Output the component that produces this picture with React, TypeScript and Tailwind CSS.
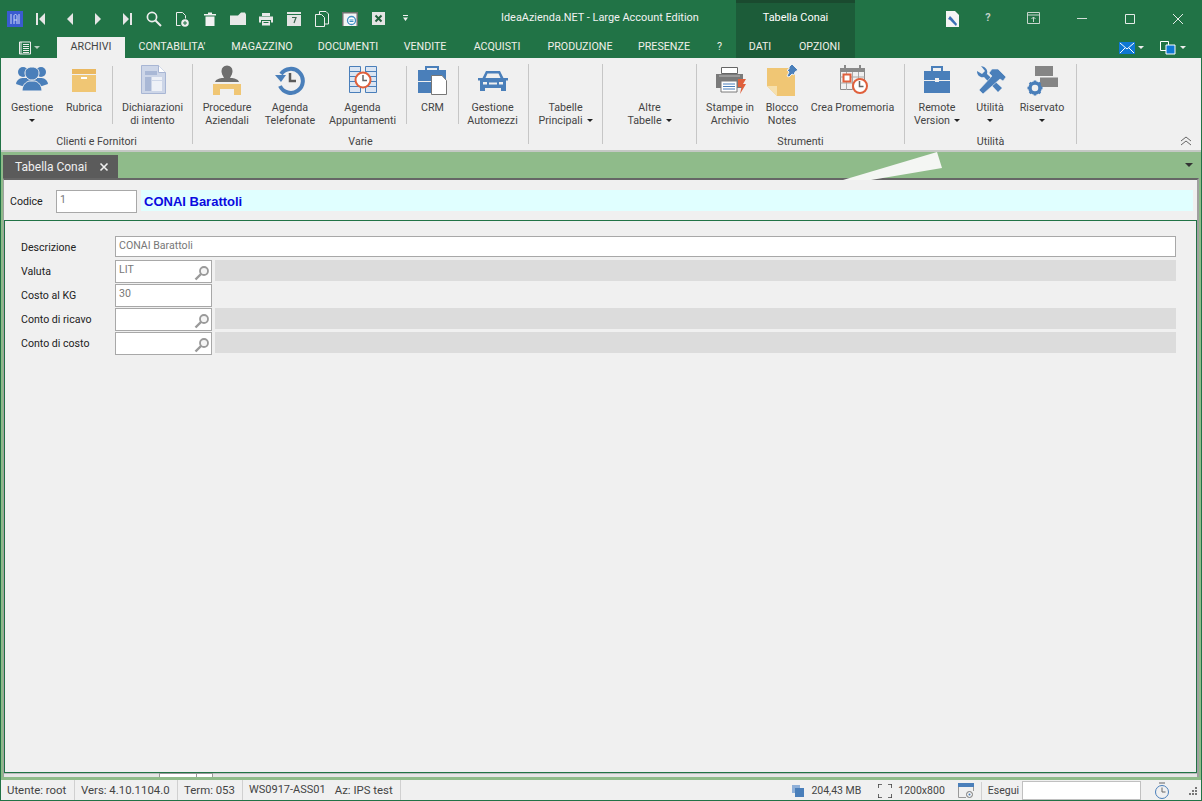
import type { ReactNode } from 'react'

const GREEN = 'bg-[#217346]'

function Glyph({ w = 18, h = 18, box = '0 0 18 18', children }: { w?: number; h?: number; box?: string; children: ReactNode }) {
  return (
    <svg width={w} height={h} viewBox={box} fill="none" className="block shrink-0">
      {children}
    </svg>
  )
}

const QAT: ReactNode[] = [
  <Glyph key="first"><path d="M3 3h2v12H3zM12 3v12L6 9z" fill="#e6e6e6" /></Glyph>,
  <Glyph key="prev"><path d="M12 3v12L6 9z" fill="#e6e6e6" /></Glyph>,
  <Glyph key="next"><path d="M6 3v12l6-6z" fill="#e6e6e6" /></Glyph>,
  <Glyph key="last"><path d="M13 3h2v12h-2zM6 3v12l6-6z" fill="#e6e6e6" /></Glyph>,
  <Glyph key="search"><circle cx="7" cy="7" r="4.6" stroke="#eee" strokeWidth="1.7" /><path d="M10.5 10.5 16 16" stroke="#eee" strokeWidth="2" /></Glyph>,
  <Glyph key="new"><path d="M3.500 2.500h6l3 3v3M3.500 2.500v13h4" stroke="#eee" /><circle cx="12" cy="13" r="3.800" fill="#eee" /><path d="M10 13h4M12 11v4" stroke="#217346" /></Glyph>,
  <Glyph key="trash"><path d="M3 4h12v1.500H3zM7 2.500h4V4H7zM4.500 6.500h9V16h-9z" fill="#f2f2f2" /></Glyph>,
  <Glyph key="folder"><path d="M1 5.500h8l3-3h4l1 2V15H1z" fill="#e8e8e8" /></Glyph>,
  <Glyph key="print"><path d="M5 3h8v3H5zM2 6.500h14v6h-2V10H4v2.500H2zM5 11h8v4.500H5z" fill="#e8e8e8" /><path d="M6.500 12.500h5" stroke="#217346" /></Glyph>,
  <Glyph key="calc"><path d="M2 2h14v14H2z" fill="#e4e4e4" /><path d="M2 4.500h14" stroke="#217346" /><path d="M7 7.500h4l-2 5.500" stroke="#3c6650" strokeWidth="1.200" /></Glyph>,
  <Glyph key="copy"><path d="M6.500 4V1.500H13l2.500 2.500v10H12" stroke="#eee" /><path d="M2.500 4.500h6l3 3v9h-9z" stroke="#eee" /></Glyph>,
  <Glyph key="preview"><path d="M1 3h16v13H1z" fill="#f4f4f4" /><path d="M1 2h16v1.500H1zM1 2h1.500v14H1zM15.500 2H17v14h-1.500z" fill="#707070" /><circle cx="10.500" cy="10.500" r="4" stroke="#3f8fc4" strokeWidth="1.300" fill="#fff" /><path d="M8.500 10h4M8.500 11.500h4" stroke="#3f8fc4" /></Glyph>,
  <Glyph key="excel"><path d="M3 2h13v13H3z" fill="#e4e4e4" /><path d="m6.500 5.500 6 6M12.500 5.500l-6 6" stroke="#20603c" strokeWidth="2" /></Glyph>,
  <Glyph key="more"><path d="M6 5h5v1H6zM6 7.500h5L8.500 11z" fill="#f0f0f0" /></Glyph>,
]

const BLUE = '#4a7fba'
const ORANGE = '#f0c674'
const RED = '#e0603c'

function Icon({ children }: { children: ReactNode }) {
  return (
    <svg width={32} height={32} viewBox="0 0 32 32" fill="none" className="block">
      {children}
    </svg>
  )
}

const People = (
  <Icon>
    <circle cx="7" cy="8" r="5" fill={BLUE} />
    <circle cx="25" cy="8" r="5" fill={BLUE} />
    <path d="M0 20c1-5 4-6 8-6h16c4 0 7 1 8 6l-6 2H6z" fill={BLUE} />
    <path d="M9 9c0-4 3-6 7-6s7 2 7 6-3 7-7 7-7-3-7-7z" fill={BLUE} stroke="#f0f0f0" />
    <path d="M6 27c0-6 4-9 7-10h6c3 1 7 4 7 10z" fill={BLUE} stroke="#f0f0f0" />
  </Icon>
)
const Box = (
  <Icon>
    <path d="M4 5h24v5H4z" fill="#eab860" />
    <path d="M4 11h24v17H4z" fill={ORANGE} />
    <path d="M13 13h6v2h-6z" fill="#fff" />
  </Icon>
)
const FormDoc = (
  <Icon>
    <path d="M4.500 1.500h17l7 7v21h-24z" fill="#cdd6e8" stroke="#a8b6d4" />
    <path d="M21.500 1.500v7h7" fill="#fff" stroke="#a8b6d4" />
    <path d="M8 7h12v4H8zM8 13h6v14H8zM15 13h10v3H15zM15 17h10v10H15z" fill="#eef1f7" />
    <path d="M8 7h12v4H8zM8 13h6v14H8z" fill="#a9b8d6" />
  </Icon>
)
const DeskPerson = (
  <Icon>
    <circle cx="16" cy="7" r="5.500" fill="#6e6e6e" />
    <path d="M16 2c3 0 6 3 5 8l-2 4h-6l-2-4c-1-5 2-8 5-8z" fill="#6e6e6e" />
    <path d="M4 18c1-3 5-4 8-4h8c3 0 7 1 8 4z" fill="#6e6e6e" />
    <path d="M2 20h28v11h-7v-6H9v6H2z" fill={ORANGE} />
  </Icon>
)
const History = (
  <Icon>
    <path d="M7 10a12 12 0 1 1-1 12" stroke={BLUE} strokeWidth="4" />
    <path d="M1 11h11l-5 7z" fill={BLUE} />
    <path d="M16 9v8h6" stroke="#5a5a5a" strokeWidth="2.500" />
  </Icon>
)
const TableClock = (
  <Icon>
    <path d="M2.500 2.500h11v26h-11zM18.500 2.500h11v26h-11z" fill="#dbe5f2" stroke={BLUE} />
    <path d="M3 7.500h10M3 12.500h10M3 17.500h10M3 22.500h10M19 7.500h10M19 12.500h10M19 17.500h10M19 22.500h10" stroke={BLUE} />
    <circle cx="16" cy="16" r="7.500" fill="#fff" stroke={RED} strokeWidth="2" />
    <path d="M16 11v5.500h4" stroke="#666" strokeWidth="1.500" />
  </Icon>
)
const BriefDoc = (
  <Icon>
    <path d="M9 6V3h12v3" stroke={BLUE} strokeWidth="2" />
    <path d="M1 6h28v11H1zM1 18h16v11H1z" fill={BLUE} />
    <path d="M14.500 11.500H25l4.500 5v14h-15z" fill="#fff" stroke="#777" />
  </Icon>
)
const Car = (
  <Icon>
    <path d="M9 7h14l3.500 7H31v2.500h-2V27h-5v-3H8v3H3V16.500H1V14h4.500z" fill={BLUE} />
    <path d="M10.500 9.500h11l2 4.500h-15z" fill="#f0f0f0" />
    <path d="M6 18h4v2.500H6zM22 18h4v2.500h-4zM12 18.500h8v2h-8z" fill="#f0f0f0" />
  </Icon>
)
const PrinterBolt = (
  <Icon>
    <path d="M7.500 3.500h16v6h-16z" fill="#fff" stroke="#666" />
    <path d="M2 10h27v14H2z" fill="#7a7a7a" />
    <path d="M5 11h21v2H5z" fill="#9a9a9a" />
    <path d="M7 17h16v11H7z" fill="#fff" stroke="#7a7a7a" />
    <path d="M9 20h12M9 22.500h12M9 25h12" stroke={BLUE} />
    <path d="M24 15h8l-3 5h3l-6 10 1.500-7H24z" fill={RED} />
  </Icon>
)
const Note = (
  <Icon>
    <path d="M1 4h28v28H11L1 22z" fill={ORANGE} />
    <path d="M1 22h10v10z" fill="#f6e0ad" />
    <path d="m23 3 3-3 6 6-3 2-1 3-2-1-3 3-2-1 2-4-2-2 2-1z" fill={BLUE} stroke="#f0f0f0" />
  </Icon>
)
const CalendarClock = (
  <Icon>
    <path d="M3.500 4.500h24v21h-24z" fill="#f0f0f0" stroke="#8a8a8a" />
    <path d="M3 4h25v4H3z" fill="#8a8a8a" />
    <path d="M7 1h2v5H7zM22 1h2v5h-2z" fill="#8a8a8a" />
    <path d="M3.500 13h24M3.500 19h24M9.500 8v18M15.500 8v18M21.500 8v18" stroke="#a8a8a8" />
    <path d="M6.500 10.500h7v7h-7z" fill="#fff" stroke={RED} strokeWidth="2" />
    <circle cx="23" cy="22" r="7" fill="#fff" stroke={RED} strokeWidth="2" />
    <path d="M22.500 17v5.500h4" stroke="#666" strokeWidth="1.500" />
  </Icon>
)
const Briefcase = (
  <Icon>
    <path d="M11 7V3h10v4" stroke={BLUE} strokeWidth="2" />
    <path d="M3 7h26v9H3zM3 17h26v12H3z" fill={BLUE} />
    <path d="M14 14h4v4h-4z" fill="#f0f0f0" />
  </Icon>
)
const Tools = (
  <Icon>
    <path d="M3 7c0 5 4 7 7 6l14 15 4-4L13 10c1-4-1-7-6-8l4 5-3 3z" fill={BLUE} />
    <path d="m5 26 13-14-3-3 3-4h6l8 8-3 4-3-2L9 30z" fill={BLUE} stroke="#f0f0f0" strokeWidth=".6" />
  </Icon>
)
const GearBoxes = (
  <Icon>
    <path d="M9 2h18v10H9zM14 13h18v10H14z" fill="#858585" />
    <path d="M14 13h18" stroke="#f0f0f0" />
    <circle cx="9" cy="24" r="5" stroke={BLUE} strokeWidth="3.500" />
    <path d="M9 16.500v3M9 28.500v3M1.500 24h3M13.500 24h3M3.700 18.700l2 2M12.300 27.300l2 2M14.300 18.700l-2 2M5.700 27.300l-2 2" stroke={BLUE} strokeWidth="2.500" />
  </Icon>
)

function Caret() {
  return <span className="block h-0 w-0 border-x-[3px] border-t-[3px] border-x-transparent border-t-[#222]" />
}

function Tool({ w, icon, lines, caret }: { w: string; icon?: ReactNode; lines: string[]; caret?: 'inline' | 'below' }) {
  return (
    <div className={`${w} flex shrink-0 flex-col items-center`}>
      <div className="h-[32px] shrink-0">{icon}</div>
      <div className="mt-[5px] text-center leading-[13px] whitespace-nowrap">
        {lines.map((l, i) => (
          <div key={l} className="flex items-center justify-center">
            {l}
            {caret === 'inline' && i === lines.length - 1 && (
              <span className="ml-[4px]">
                <Caret />
              </span>
            )}
          </div>
        ))}
        {caret === 'below' && (
          <div className="flex h-[13px] items-center justify-center">
            <Caret />
          </div>
        )}
      </div>
    </div>
  )
}

function Sep({ className = '' }: { className?: string }) {
  return <div className={`mt-[2px] h-[58px] w-px shrink-0 bg-[#c6c6c6] ${className}`} />
}

function Group({ w, label, children }: { w: string; label?: string; children: ReactNode }) {
  return (
    <div className={`${w} flex h-[80px] shrink-0 flex-col border-r border-[#c6c6c6]`}>
      <div className="flex h-[62px]">{children}</div>
      <div className="mt-[9px] text-center leading-[13px]">{label}</div>
    </div>
  )
}

function Ribbon() {
  return (
    <div className="flex h-[92px] bg-[#f0f0f0] pt-[6px] text-[10.7px] text-[#444]">
      <Group w="w-[192px]" label="Clienti e Fornitori">
        <Tool w="w-[62px]" icon={People} lines={['Gestione']} caret="below" />
        <Tool w="w-[42px]" icon={Box} lines={['Rubrica']} />
        <Sep className="ml-[7px]" />
        <Tool w="w-[79px]" icon={FormDoc} lines={['Dichiarazioni', 'di intento']} />
      </Group>
      <Group w="w-[336px]" label="Varie">
        <Tool w="w-[68px]" icon={DeskPerson} lines={['Procedure', 'Aziendali']} />
        <Tool w="w-[58px]" icon={History} lines={['Agenda', 'Telefonate']} />
        <Tool w="w-[87px]" icon={TableClock} lines={['Agenda', 'Appuntamenti']} />
        <Sep />
        <Tool w="w-[51px]" icon={BriefDoc} lines={['CRM']} />
        <Sep />
        <Tool w="w-[67px]" icon={Car} lines={['Gestione', 'Automezzi']} />
      </Group>
      <Group w="w-[74px]">
        <Tool w="w-[73px]" lines={['Tabelle', 'Principali']} caret="inline" />
      </Group>
      <Group w="w-[94px]">
        <Tool w="w-[93px]" lines={['Altre', 'Tabelle']} caret="inline" />
      </Group>
      <Group w="w-[208px]" label="Strumenti">
        <Tool w="w-[66px]" icon={PrinterBolt} lines={['Stampe in', 'Archivio']} />
        <Tool w="w-[38px]" icon={Note} lines={['Blocco', 'Notes']} />
        <Tool w="w-[103px]" icon={CalendarClock} lines={['Crea Promemoria']} />
      </Group>
      <Group w="w-[172px]" label="Utilità">
        <Tool w="w-[64px]" icon={Briefcase} lines={['Remote', 'Version']} caret="inline" />
        <Tool w="w-[42px]" icon={Tools} lines={['Utilità']} caret="below" />
        <Tool w="w-[62px]" icon={GearBoxes} lines={['Riservato']} caret="below" />
      </Group>
      <div className="flex flex-1 items-end justify-end pr-[9px] pb-[4px]">
        <svg width="12" height="10" viewBox="0 0 12 10" fill="none">
          <path d="m1 5 5-4 5 4M1 9l5-4 5 4" stroke="#666" />
        </svg>
      </div>
    </div>
  )
}

const MENU: [string, string][] = [
  ['CONTABILITA\'', 'w-[94px]'],
  ['MAGAZZINO', 'w-[86px]'],
  ['DOCUMENTI', 'w-[86px]'],
  ['VENDITE', 'w-[68px]'],
  ['ACQUISTI', 'w-[76px]'],
  ['PRODUZIONE', 'w-[90px]'],
  ['PRESENZE', 'w-[78px]'],
  ['?', 'w-[33px]'],
]

function TitleBar() {
  return (
    <div className="flex h-[37px] items-stretch text-[10.9px] text-white">
      <div className="flex w-[27px] items-center justify-center">
        <div className="flex h-[16px] w-[16px] items-center justify-center bg-[#3a5bd0]">
          <svg width="12" height="12" viewBox="0 0 12 12" fill="none">
            <path d="M2 1v10M5 11V3c0-2 3-2 3 0v8M5 7h3M10 1v10" stroke="#cfd8f5" />
          </svg>
        </div>
      </div>
      {QAT.map((g, i) => (
        <div key={i} className="flex w-[28px] items-center justify-center">
          {g}
        </div>
      ))}
      <div className="flex w-[316px] items-center pl-[81px] whitespace-nowrap text-[#f2f2f2]">IdeaAzienda.NET - Large Account Edition</div>
      <div className="flex w-[119px] items-center justify-center border-t-[3px] border-[#1a4a2f] bg-[#1c5c39] pb-[3px]">Tabella Conai</div>
      <div className="-mr-px flex flex-1 items-center justify-end">
        <div className="flex w-[34px] justify-center">
          <svg width="14" height="16" viewBox="0 0 14 16" fill="none">
            <path d="M0 0h9l4 4v12H0z" fill="#f4f4f4" />
            <path d="m4 5 2 2 5 6-1 2-6-6-2-1z" fill="#3a6fb5" />
          </svg>
        </div>
        <div className="mr-[5px] ml-px flex w-[34px] justify-center font-bold text-[#c2d0c8]">?</div>
        {[
          <path key="a" d="M.5.5h12v11H.5zM1 3h11M6.500 10V5M4.500 7l2-2 2 2" stroke="#c8d6ce" />,
          <path key="b" d="M2 6.500h10" stroke="#d4ded8" />,
          <path key="c" d="M2.500 2.500h9v9h-9z" stroke="#e4ebe7" />,
          <path key="d" d="m2 2 10 10M12 2 2 12" stroke="#e4ebe7" />,
        ].map((p) => (
          <div key={p.key} className="flex w-[48px] justify-center">
            <svg width="14" height="14" viewBox="0 0 14 14" fill="none">
              {p}
            </svg>
          </div>
        ))}
      </div>
    </div>
  )
}

function MenuBar() {
  return (
    <div className="flex h-[21px] items-stretch text-[10.7px] text-[#f0f0e8]">
      <div className="flex w-[56px] items-center justify-center gap-[2px]">
        <svg width="14" height="14" viewBox="0 0 14 14" fill="none">
          <path d="M1.500 1h11v12h-11z" stroke="#eee" />
          <path d="M3 1v12" stroke="#eee" />
          <path d="M5 3.500h6M5 5.500h6M5 7.500h6M5 9.500h6M5 11.500h6" stroke="#eee" />
        </svg>
        <span className="h-0 w-0 border-x-[3px] border-t-[3px] border-x-transparent border-t-[#b7cfc1]" />
      </div>
      <div className="flex w-[68px] items-center justify-center bg-[#f0f0f0] text-[#444]">ARCHIVI</div>
      {MENU.map(([t, w]) => (
        <div key={t} className={`${w} flex items-center justify-center`}>
          {t}
        </div>
      ))}
      <div className="flex w-[119px] bg-[#1c5c39]">
        <div className="flex w-[48px] items-center justify-center">DATI</div>
        <div className="flex flex-1 items-center justify-center">OPZIONI</div>
      </div>
      <div className="flex flex-1 items-center justify-end pr-[15px]">
        <svg width="16" height="12" viewBox="0 0 16 12" fill="none">
          <path d="M0 0h16v12H0z" fill="#0f78d4" />
          <path d="m1 1 7 6 7-6M1 11l5-5M15 11l-5-5" stroke="#fff" />
        </svg>
        <span className="ml-[3px] h-0 w-0 border-x-[3px] border-t-[3px] border-x-transparent border-t-[#eee]" />
        <svg width="16" height="14" viewBox="0 0 16 14" fill="none" className="ml-[16px]">
          <path d="M.5.5h8v9h-8z" fill="#217346" stroke="#fff" />
          <path d="M6 4h9v9H6z" fill="#0f78d4" stroke="#fff" />
        </svg>
        <span className="ml-[4px] h-0 w-0 border-x-[3px] border-t-[3px] border-x-transparent border-t-[#eee]" />
      </div>
    </div>
  )
}

function TabStrip() {
  return (
    <div className="relative flex h-[28px] items-end justify-between border-t-2 border-[#c4c8c4] pl-[2px] pr-[8px]">
      <div className="flex h-[23px] w-[115px] items-center justify-between bg-[#5b5b5b] pl-[12px] pr-[9px] text-[12px] text-[#f0f0f0]">
        <span>Tabella Conai</span>
        <svg width="10" height="10" viewBox="0 0 10 10" fill="none">
          <path d="m1.500 1.500 7 7M8.500 1.500l-7 7" stroke="#f0f0f0" strokeWidth="1.600" />
        </svg>
      </div>
      <svg width="100" height="28" viewBox="0 0 100 28" className="absolute top-0 left-[842px]">
        <path d="M94 0 99 16 28 28H0z" fill="#f4f6f3" />
      </svg>
      <span className="mb-[11px] h-0 w-0 border-x-[4px] border-t-[4px] border-x-transparent border-t-[#333]" />
    </div>
  )
}

function Box2({ className, text, search }: { className: string; text?: string; search?: boolean }) {
  return (
    <div className={`${className} flex shrink-0 justify-between border border-[#a8a8a8] bg-white pl-[3px] pr-[1px] text-[#777]`}>
      <span className="leading-[17px]">{text}</span>
      {search && (
        <svg width="16" height="16" viewBox="0 0 16 16" fill="none" className="mt-[4px]">
          <circle cx="10" cy="6" r="4" stroke="#9a9a9a" strokeWidth="1.800" fill="#f5f5f5" />
          <path d="M7 9 1.500 14.500" stroke="#9a9a9a" strokeWidth="2.400" />
        </svg>
      )}
    </div>
  )
}

function Row({ label, children, className = '' }: { label: string; children: ReactNode; className?: string }) {
  return (
    <div className={`flex h-[24px] items-start ${className}`}>
      <div className="flex h-[23px] w-[94px] shrink-0 items-center text-[#222]">{label}</div>
      {children}
    </div>
  )
}

function Lookup({ text, desc = true }: { text?: string; desc?: boolean }) {
  return (
    <>
      <Box2 className="h-[23px] w-[97px]" text={text} search={desc} />
      {desc && <div className="ml-[3px] h-[21px] w-[961px] bg-[#dcdcdc]" />}
    </>
  )
}

function Form() {
  return (
    <div className="flex flex-1 flex-col border-t-2 border-r-2 border-l border-[#666] border-r-[#a0a0a0] border-l-[#a0a0a0] bg-[#f0f0f0] text-[10.6px]">
      <div className="flex h-[40px] pt-[10px] pr-[4px] pl-[6px]">
        <div className="flex h-[24px] w-[46px] shrink-0 items-center text-[#222]">Codice</div>
        <Box2 className="h-[23px] w-[81px]" text="1" />
        <div className="ml-[4px] flex h-[21px] flex-1 items-center bg-[#e0ffff] pt-[2px] pl-[3px] font-['Liberation_Sans',sans-serif] text-[13px] font-bold text-[#0a0ae0]">
          CONAI Barattoli
        </div>
      </div>
      <div className="flex-1 border border-[#217346] pt-[15px] pl-[16px]">
        <Row label="Descrizione">
          <Box2 className="h-[21px] w-[1061px]" text="CONAI Barattoli" />
        </Row>
        <Row label="Valuta"><Lookup text="LIT" /></Row>
        <Row label="Costo al KG"><Lookup text="30" desc={false} /></Row>
        <Row label="Conto di ricavo"><Lookup /></Row>
        <Row label="Conto di costo"><Lookup /></Row>
      </div>
      <div className="flex h-[4px] bg-[#e6e6e6]">
        <div className="w-[155px] border-t border-[#bbb]" />
        <div className="w-[38px] border border-b-0 border-[#999] bg-white" />
        <div className="w-[16px] border-t border-r border-[#999] bg-white" />
        <div className="flex-1 border-t border-[#bbb]" />
      </div>
    </div>
  )
}

function Cell({ w, children }: { w: string; children: ReactNode }) {
  return <div className={`${w} flex h-full shrink-0 items-center border-r border-[#d0d0d0] pt-px pl-[6px] whitespace-nowrap`}>{children}</div>
}

function StatusBar() {
  return (
    <div className="flex h-[20px] items-center bg-[#f0f0f0] text-[11.4px] text-[#444]">
      <Cell w="w-[74px]">Utente: root</Cell>
      <Cell w="w-[103px]">Vers: 4.10.1104.0</Cell>
      <Cell w="w-[65px]">Term: 053</Cell>
      <Cell w="w-[158px]">
        <span className="mr-[9px] text-[11px]">WS0917-ASS01</span>Az: IPS test
      </Cell>
      <div className="flex flex-1 items-center justify-end pt-px text-[10.5px]">
        <svg width="12" height="12" viewBox="0 0 12 12">
          <path d="M0 0h8v8H0z" fill="#8fb0d8" />
          <path d="M3 3h9v9H3z" fill="#4a7fba" />
        </svg>
        <span className="ml-[7px]">204,43 MB</span>
        <svg width="14" height="14" viewBox="0 0 14 14" fill="none" className="ml-[17px]">
          <path d="M0 4V0h4M10 0h4v4M14 10v4h-4M4 14H0v-4" stroke="#444" strokeWidth="1.600" />
        </svg>
        <span className="ml-[6px]">1200x800</span>
        <svg width="16" height="15" viewBox="0 0 16 15" fill="none" className="ml-[13px]">
          <path d="M0 0h16v4H0z" fill="#4a7fba" />
          <path d="M.5 4v10.500H8M15.500 4v4" stroke="#999" />
          <circle cx="11.500" cy="11.500" r="3" stroke="#777" />
          <circle cx="11.500" cy="11.500" r="1" fill="#4a7fba" />
        </svg>
        <div className="ml-[7px] h-[18px] w-px bg-[#d0d0d0]" />
        <span className="ml-[6px]">Esegui</span>
        <div className="ml-[3px] h-[19px] w-[119px] border border-[#c0c0c0] bg-white" />
        <svg width="16" height="18" viewBox="0 0 16 18" fill="none" className="ml-[13px]">
          <circle cx="8" cy="10" r="6.500" stroke="#4a7fba" />
          <path d="M5 1h6M8 5.500V10h3.500" stroke="#666" />
        </svg>
        <svg width="10" height="10" viewBox="0 0 10 10" className="mr-[3px] ml-[18px]">
          <path d="M7 1h2v2H7zM4 4h2v2H4zM7 4h2v2H7zM1 7h2v2H1zM4 7h2v2H4zM7 7h2v2H7z" fill="#777" />
        </svg>
      </div>
    </div>
  )
}

export default function App() {
  return (
    <div className={`flex h-[801px] w-[1202px] flex-col overflow-hidden ${GREEN} px-px pb-px font-['Roboto',sans-serif]`}>
      <TitleBar />
      <MenuBar />
      <Ribbon />
      <div className="flex flex-1 flex-col bg-[#8fbb8a]">
        <TabStrip />
        <div className="flex flex-1 flex-col px-[2px] pb-[3px]">
          <Form />
        </div>
        <StatusBar />
      </div>
    </div>
  )
}
